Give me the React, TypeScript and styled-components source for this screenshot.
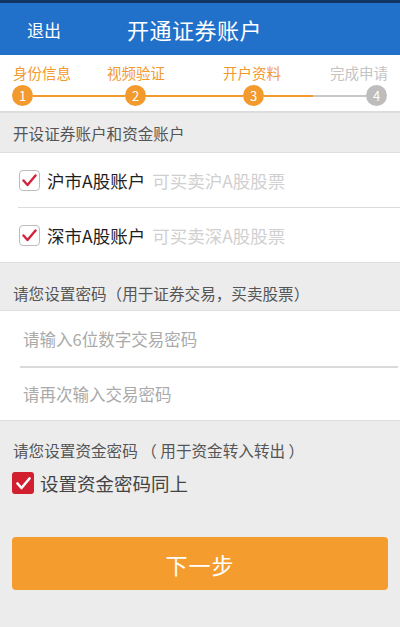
import { Fragment } from 'react';
import styled, { createGlobalStyle } from 'styled-components';

const GlobalStyle = createGlobalStyle`
  html, body {
    margin: 0;
    padding: 0;
    background: #ececec;
    font-family: "Noto Sans CJK SC", "Noto Sans", "Liberation Sans", sans-serif;
  }
`;

const Page = styled.div`
  width: 400px;
  min-height: 627px;
  background: #ececec;
  display: flex;
  flex-direction: column;
`;

const Header = styled.header`
  height: 52px;
  border-top: 3px solid #123463;
  background: #2170c9;
  display: flex;
  align-items: center;
  padding-left: 27px;
  color: #fff;
`;

const BackLink = styled.span`
  font-size: 17px;
  width: 34px;
  margin-right: 66px;
`;

const Title = styled.h1`
  margin: 0;
  font-size: 22px;
  font-weight: 400;
  letter-spacing: 0.5px;
`;

const Steps = styled.div`
  background: #fff;
  height: 56px;
  display: flex;
  flex-direction: column;
  padding-top: 8px;
  box-sizing: border-box;
`;

const StepLabels = styled.div`
  display: grid;
  grid-template-columns: 94px 116px 107px auto;
  padding-left: 13px;
  height: 20px;
  align-items: center;
`;

const StepLabel = styled.span<{ $done?: boolean }>`
  font-size: 14.5px;
  line-height: 20px;
  color: ${(p) => (p.$done ? '#f29a2e' : '#c4c4c4')};
`;

const Track = styled.div`
  display: flex;
  align-items: center;
  padding-left: 12px;
  margin-top: 2px;
`;

const Dot = styled.span<{ $done?: boolean }>`
  width: 21px;
  height: 21px;
  border-radius: 50%;
  background: ${(p) => (p.$done ? '#f29a2e' : '#bdbdbd')};
  color: #fff;
  font-size: 13px;
  display: flex;
  align-items: center;
  justify-content: center;
  flex-shrink: 0;
`;

const Connector = styled.span<{ $w: number; $fill: number }>`
  width: ${(p) => p.$w}px;
  height: 2px;
  background: linear-gradient(
    to right,
    #f29a2e ${(p) => p.$fill}%,
    #c8c8c8 ${(p) => p.$fill}%
  );
`;

const SectionTitle = styled.div<{ $top: number; $bottom: number; $border?: boolean }>`
  padding: ${(p) => p.$top}px 13px ${(p) => p.$bottom}px;
  font-size: 15.6px;
  line-height: 20px;
  color: #555;
  border-top: ${(p) => (p.$border ? '2px solid #dcdcdc' : 'none')};
`;

const Block = styled.div`
  background: #fff;
  border-top: 1px solid #dedede;
  border-bottom: 1px solid #dedede;
`;

const AccountRow = styled.div<{ $line?: boolean }>`
  height: 54px;
  display: flex;
  align-items: center;
  margin-left: 18px;
  padding-left: 1px;
  border-bottom: ${(p) => (p.$line ? '1px solid #dcdcdc' : 'none')};
`;

const Box = styled.span`
  width: 19px;
  height: 19px;
  border: 1px solid #bcbcbc;
  border-radius: 4px;
  background: #fff;
  display: flex;
  align-items: center;
  justify-content: center;
  margin-right: 7px;
`;

const AccountName = styled.span`
  font-size: 17.5px;
  color: #1e1e1e;
  margin-right: 7px;
`;

const Hint = styled.span`
  font-size: 17.5px;
  color: #d0d0d0;
`;

const InputRow = styled.div<{ $line?: boolean; $h: number }>`
  height: ${(p) => p.$h}px;
  display: flex;
  align-items: center;
  margin: 0 2px 0 20px;
  padding-left: 3px;
  border-bottom: ${(p) => (p.$line ? '2px solid #dadada' : 'none')};
`;

const Field = styled.input`
  border: none;
  outline: none;
  background: transparent;
  width: 100%;
  font-family: inherit;
  font-size: 16.5px;
  padding: 0;
  color: #333;

  &::placeholder {
    color: #aaa;
  }
`;

const SameRow = styled.div`
  display: flex;
  align-items: center;
  padding-left: 12px;
  margin-top: 12px;
  height: 22px;
`;

const RedBox = styled.span`
  width: 22px;
  height: 22px;
  border-radius: 3px;
  background: #d11f2f;
  display: flex;
  align-items: center;
  justify-content: center;
  margin-right: 6px;
`;

const SameLabel = styled.span`
  font-size: 18.5px;
  line-height: 22px;
  color: #444;
`;

const NextButton = styled.button`
  margin: 43px 12px 0;
  height: 53px;
  border: none;
  border-radius: 4px;
  background: #f59c2f;
  color: #fff;
  font-family: inherit;
  font-size: 22px;
  letter-spacing: 1px;
  cursor: pointer;
`;

const Check = ({ color, width = 2.4 }: { color: string; width?: number }) => (
  <svg width="15" height="13" viewBox="0 0 15 13">
    <path
      d="M1.5 6.5 L5.5 11 L13.5 1.5"
      fill="none"
      stroke={color}
      strokeWidth={width}
      strokeLinecap="round"
      strokeLinejoin="round"
    />
  </svg>
);

const steps = [
  { label: '身份信息', done: true },
  { label: '视频验证', done: true },
  { label: '开户资料', done: true },
  { label: '完成申请', done: false },
];

const connectors = [
  { w: 92, fill: 100 },
  { w: 97, fill: 100 },
  { w: 102, fill: 48 },
];

export default function App() {
  return (
    <>
      <GlobalStyle />
      <Page>
        <Header>
          <BackLink>退出</BackLink>
          <Title>开通证券账户</Title>
        </Header>

        <Steps>
          <StepLabels>
            {steps.map((s) => (
              <StepLabel key={s.label} $done={s.done}>
                {s.label}
              </StepLabel>
            ))}
          </StepLabels>
          <Track>
            {steps.map((s, i) => (
              <Fragment key={s.label}>
                <Dot $done={s.done}>{i + 1}</Dot>
                {i < connectors.length && (
                  <Connector $w={connectors[i].w} $fill={connectors[i].fill} />
                )}
              </Fragment>
            ))}
          </Track>
        </Steps>

        <SectionTitle $top={10} $bottom={9} $border>
          开设证券账户和资金账户
        </SectionTitle>
        <Block>
          <AccountRow $line>
            <Box>
              <Check color="#d3233a" />
            </Box>
            <AccountName>沪市A股账户</AccountName>
            <Hint>可买卖沪A股股票</Hint>
          </AccountRow>
          <AccountRow>
            <Box>
              <Check color="#d3233a" />
            </Box>
            <AccountName>深市A股账户</AccountName>
            <Hint>可买卖深A股股票</Hint>
          </AccountRow>
        </Block>

        <SectionTitle $top={20} $bottom={7}>
          请您设置密码（用于证券交易，买卖股票）
        </SectionTitle>
        <Block>
          <InputRow $line $h={55}>
            <Field type="password" placeholder="请输入6位数字交易密码" />
          </InputRow>
          <InputRow $h={52}>
            <Field type="password" placeholder="请再次输入交易密码" />
          </InputRow>
        </Block>

        <SectionTitle $top={19} $bottom={0}>
          请您设置资金密码 （ 用于资金转入转出 ）
        </SectionTitle>
        <SameRow>
          <RedBox>
            <Check color="#fff" width={2.6} />
          </RedBox>
          <SameLabel>设置资金密码同上</SameLabel>
        </SameRow>

        <NextButton>下一步</NextButton>
      </Page>
    </>
  );
}
